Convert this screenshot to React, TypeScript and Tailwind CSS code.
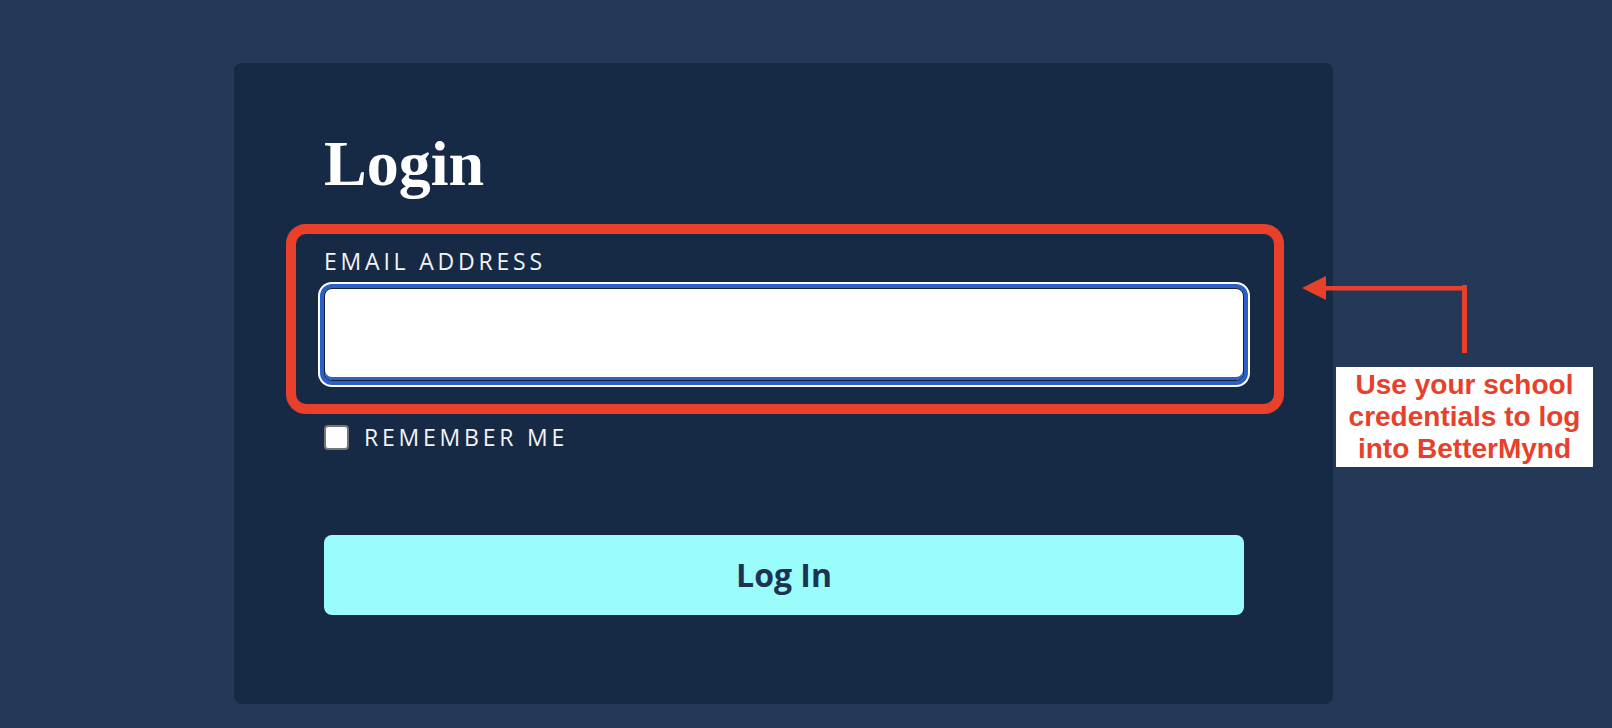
import { useState } from 'react'

const sans = { fontFamily: '"Open Sans", "Liberation Sans", sans-serif' }

function Annotation() {
  return (
    <>
      {/* red highlight round the email field */}
      <div className="pointer-events-none absolute left-[52px] top-[161px] h-[190px] w-[998px] rounded-[20px] border-[10px] border-[#e8402a]" />

      {/* elbow arrow pointing at the highlight */}
      <svg
        className="absolute left-[1062px] top-[209px]"
        width="180"
        height="90"
        viewBox="0 0 180 90"
      >
        <polygon points="6,16 30,4 30,28" fill="#e8402a" />
        <rect x="28" y="14" width="143" height="4.5" fill="#e8402a" />
        <rect x="166" y="13" width="5" height="68" fill="#e8402a" />
      </svg>

      <div
        className="absolute left-[1102px] top-[304px] flex h-[100px] w-[257px] flex-col items-center justify-center bg-white text-center text-[28px] font-bold leading-[32px] text-[#e8402a]"
        style={{ fontFamily: '"Liberation Sans", Arial, sans-serif' }}
      >
        <span>Use your school</span>
        <span>credentials to log</span>
        <span>into BetterMynd</span>
      </div>
    </>
  )
}

export default function App() {
  const [email, setEmail] = useState('')
  const [remember, setRemember] = useState(false)

  return (
    <div className="min-h-[728px] bg-[#243858] pb-[24px] pl-[234px] pt-[63px]">
      <div className="relative h-[641px] w-[1099px] rounded-lg bg-[#172a45] px-[90px] pt-[69px]">
        <h1
          className="text-[64px] font-bold leading-[64px] text-white"
          style={{ fontFamily: '"Liberation Serif", Georgia, serif' }}
        >
          Login
        </h1>

        <label
          htmlFor="email"
          className="mt-[50px] block text-[23px] leading-[30px] tracking-[0.165em] text-[#f2f4f7]"
          style={sans}
        >
          EMAIL ADDRESS
        </label>
        <input
          id="email"
          type="email"
          value={email}
          onChange={(e) => setEmail(e.target.value)}
          className="mt-[12px] block h-[93px] w-[920px] rounded-lg border border-[#14233a] bg-white px-4 text-[22px] text-[#172a45] shadow-[inset_0_-3px_0_#2c5fc7,0_0_0_4px_#2c5fc7,0_0_0_6px_#ffffff] outline-none"
          style={sans}
        />

        <label className="mt-[41px] flex h-[30px] cursor-pointer items-center gap-[15px]" style={sans}>
          <input
            type="checkbox"
            checked={remember}
            onChange={(e) => setRemember(e.target.checked)}
            className="h-[25px] w-[25px] appearance-none rounded-[4px] border-2 border-[#767676] bg-white checked:bg-[#2c5fc7]"
          />
          <span className="text-[23px] leading-[30px] tracking-[0.165em] text-[#f2f4f7]">REMEMBER ME</span>
        </label>

        <button
          type="button"
          className="mt-[83px] flex h-[80px] w-[920px] items-center justify-center rounded-lg bg-[#9bfcfc] text-[32px] font-bold text-[#1e3352]"
          style={sans}
        >
          Log In
        </button>

        <Annotation />
      </div>
    </div>
  )
}
